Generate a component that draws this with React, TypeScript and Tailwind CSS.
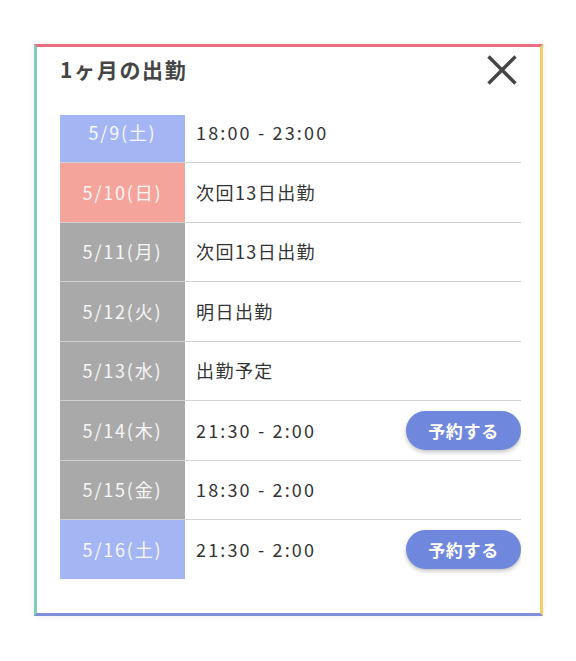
import React from "react";

type Row = {
  date: string;
  tone: "sat" | "sun" | "day";
  text: string;
  jp?: boolean;
  reserve?: boolean;
};

const rows: Row[] = [
  { date: "5/9(土)", tone: "sat", text: "18:00 - 23:00" },
  { date: "5/10(日)", tone: "sun", text: "次回13日出勤", jp: true },
  { date: "5/11(月)", tone: "day", text: "次回13日出勤", jp: true },
  { date: "5/12(火)", tone: "day", text: "明日出勤", jp: true },
  { date: "5/13(水)", tone: "day", text: "出勤予定", jp: true },
  { date: "5/14(木)", tone: "day", text: "21:30 - 2:00", reserve: true },
  { date: "5/15(金)", tone: "day", text: "18:30 - 2:00" },
  { date: "5/16(土)", tone: "sat", text: "21:30 - 2:00", reserve: true },
];

const toneClass = {
  sat: "bg-[#a4b5f3]",
  sun: "bg-[#f4a49b]",
  day: "bg-[#a9a9a9]",
};

export default function App() {
  return (
    <div
      className="min-h-[661px] bg-white pt-[44px] pl-[34px]"
      style={{ fontFamily: '"Noto Sans CJK JP", sans-serif' }}
    >
      <div className="w-[509px] h-[572px] border-[3px] border-t-[#e96f80] border-l-[#80cdbc] border-r-[#f2cf6c] border-b-[#808fd9] bg-white pl-[23px] pr-[19px] shadow-[0_0_6px_rgba(0,0,0,0.08)]">
        {/* header */}
        <div className="flex items-center justify-between h-[46px]">
          <h2 className="text-[21px] font-bold text-[#454545] tracking-[0.08em]">1ヶ月の出勤</h2>
          <svg width="32" height="32" viewBox="0 0 32 32" className="mr-[3px]">
            <path d="M2.5 2.5 L29.5 29.5 M29.5 2.5 L2.5 29.5" stroke="#454545" strokeWidth="3.4" />
          </svg>
        </div>

        {/* schedule list, scrolled slightly */}
        <div className="mt-[22px] h-[464px] overflow-hidden">
          <div className="mt-[-11.5px]">
            {rows.map((r, i) => (
              <div
                key={r.date}
                className={`flex h-[59.5px] ${i < rows.length - 1 ? "border-b border-[#d2d2d2]" : ""}`}
              >
                <div
                  className={`w-[125px] shrink-0 flex items-center justify-center text-[18px] tracking-[0.1em] text-white/90 ${toneClass[r.tone]}`}
                >
                  {r.date}
                </div>
                <div className="flex flex-1 items-center justify-between pl-[11px]">
                  <span
                    className={`text-[18px] text-[#333] ${r.jp ? "tracking-[0.08em]" : "tracking-[0.12em]"}`}
                  >
                    {r.text}
                  </span>
                  {r.reserve && (
                    <button className="w-[115px] h-[39px] rounded-full bg-[#6f87dd] text-white text-[17px] font-bold tracking-[0.04em] shadow-[0_2px_4px_rgba(0,0,0,0.25)]">
                      予約する
                    </button>
                  )}
                </div>
              </div>
            ))}
          </div>
        </div>
      </div>
    </div>
  );
}
